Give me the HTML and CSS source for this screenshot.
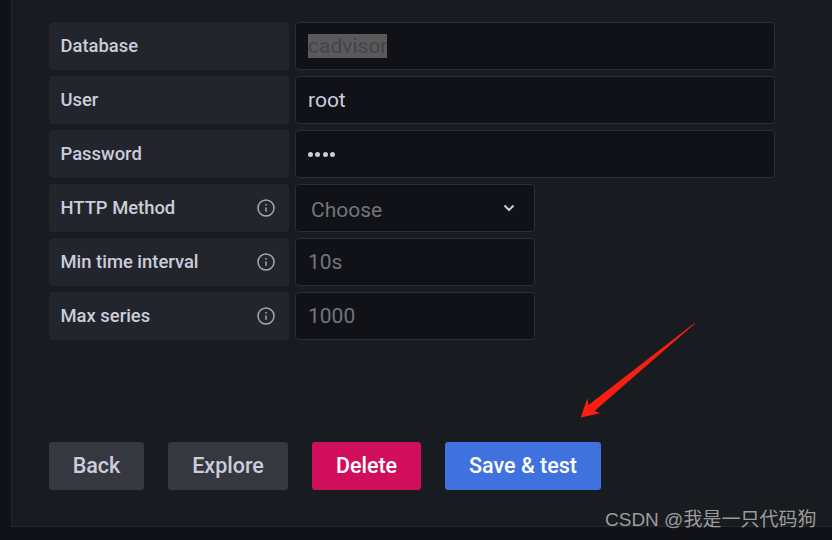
FILE: index.html
```html
<!DOCTYPE html>
<html lang="en">
<head>
    <meta charset="UTF-8">
    <meta name="viewport" content="width=device-width, initial-scale=1.0">
    <title>Data source settings</title>
    <link rel="stylesheet" href="styles.css">
</head>
<body>
    <div class="panel">
        <div class="form-rows">
            <div class="form-row">
                <div class="form-label">Database</div>
                <div class="form-input wide"><span class="selected">cadvisor</span></div>
            </div>
            <div class="form-row">
                <div class="form-label">User</div>
                <div class="form-input wide">root</div>
            </div>
            <div class="form-row">
                <div class="form-label">Password</div>
                <div class="form-input wide"><span class="dots"><i></i><i></i><i></i><i></i></span></div>
            </div>
            <div class="form-row">
                <div class="form-label">HTTP Method
                    <svg class="info-icon" viewBox="0 0 18 18"><circle cx="9" cy="9" r="8"/><path d="M9 8.4v4.4"/><path d="M9 5v1.6"/></svg>
                </div>
                <div class="form-input select">
                    <span class="placeholder">Choose</span>
                    <svg class="chevron" viewBox="0 0 12 8"><path d="M1.5 1.5 6 6l4.5-4.5"/></svg>
                </div>
            </div>
            <div class="form-row">
                <div class="form-label">Min time interval
                    <svg class="info-icon" viewBox="0 0 18 18"><circle cx="9" cy="9" r="8"/><path d="M9 8.4v4.4"/><path d="M9 5v1.6"/></svg>
                </div>
                <div class="form-input"><span class="placeholder">10s</span></div>
            </div>
            <div class="form-row">
                <div class="form-label">Max series
                    <svg class="info-icon" viewBox="0 0 18 18"><circle cx="9" cy="9" r="8"/><path d="M9 8.4v4.4"/><path d="M9 5v1.6"/></svg>
                </div>
                <div class="form-input"><span class="placeholder">1000</span></div>
            </div>
        </div>
        <div class="button-row">
            <button class="btn btn-back">Back</button>
            <button class="btn btn-explore">Explore</button>
            <button class="btn btn-delete">Delete</button>
            <button class="btn btn-save">Save &amp; test</button>
        </div>
    </div>

    <svg class="arrow" viewBox="0 0 832 540">
        <polygon points="694.5,323 695,323.6 594.5,411 600,413.3 580.7,417.5 587.3,398.3 588.5,405"/>
    </svg>
    <div class="watermark">CSDN @我是一只代码狗</div>
</body>
</html>
```

FILE: styles.css
```css
* {
    margin: 0;
    padding: 0;
    box-sizing: border-box;
}

body {
    position: relative;
    width: 832px;
    height: 540px;
    overflow: hidden;
    background: #111217;
    font-family: Roboto, 'Liberation Sans', sans-serif;
}

.panel {
    width: 821px;
    height: 527px;
    margin-left: 11px;
    padding: 22px 0 0 37px;
    background: #181b1f;
    border-left: 1px solid #24272b;
    border-bottom: 1px solid #24272b;
}

.form-rows {
    display: flex;
    flex-direction: column;
    gap: 6px;
}

.form-row {
    display: flex;
    gap: 6px;
    height: 48px;
}

.form-label {
    display: flex;
    align-items: center;
    justify-content: space-between;
    width: 240px;
    padding: 0 14px 2px 11.5px;
    background: #22252b;
    border-radius: 4px;
    color: #ccccdc;
    font-size: 18.4px;
    font-weight: 500;
}

.info-icon {
    width: 18px;
    height: 18px;
    margin-top: 1px;
    fill: none;
    stroke: #a8a9b2;
    stroke-width: 1.5;
}

.form-input {
    display: flex;
    align-items: center;
    width: 240px;
    padding: 0 12px;
    background: #111217;
    border: 1px solid #2c2e33;
    border-radius: 4px;
    color: #ccccdc;
    font-size: 21px;
}

.form-input.wide {
    width: 480px;
}

.selected {
    background: #5a5a5a;
    color: #42454c;
}

.placeholder {
    color: #73757c;
}

.dots {
    display: flex;
    gap: 2.3px;
}

.dots i {
    width: 5px;
    height: 5px;
    border-radius: 50%;
    background: #ccccdc;
}

.select {
    justify-content: space-between;
    padding: 4px 19px 0 15px;
}

.chevron {
    width: 12px;
    height: 8px;
    margin-top: -4px;
    fill: none;
    stroke: #ccccdc;
    stroke-width: 2;
}

.button-row {
    display: flex;
    gap: 24px;
    margin-top: 102px;
}

.btn {
    height: 48px;
    padding: 0 0 2px;
    border: none;
    border-radius: 3px;
    font-family: inherit;
    font-size: 21.5px;
    font-weight: 500;
}

.btn-back,
.btn-explore {
    background: #35383e;
    color: #ccccdc;
}

.btn-back {
    width: 95px;
}

.btn-explore {
    width: 120px;
}

.btn-delete {
    width: 109px;
    background: #d10e5c;
    color: white;
}

.btn-save {
    width: 156px;
    background: #3f72de;
    color: white;
}

.arrow {
    position: absolute;
    top: 0;
    left: 0;
    width: 832px;
    height: 540px;
    fill: #fa1e12;
    pointer-events: none;
}

.watermark {
    position: absolute;
    top: 504px;
    left: 605px;
    color: #9c9c9c;
    font-family: 'Liberation Sans', 'Noto Sans CJK SC', sans-serif;
    font-size: 19px;
    white-space: nowrap;
}
```
